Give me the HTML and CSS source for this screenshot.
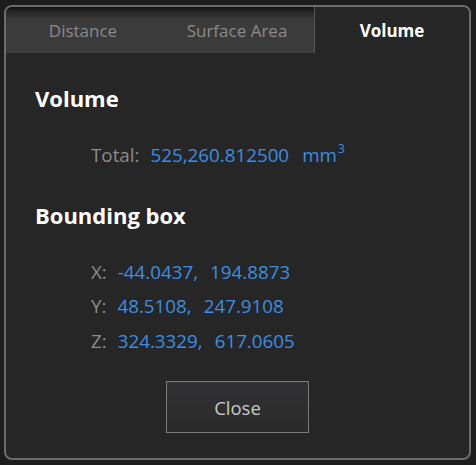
FILE: index.html
```html
<!DOCTYPE html>
<html>
<head>
<meta charset="utf-8">
<link rel="stylesheet" href="styles.css">
</head>
<body>
<div class="dialog">
  <div class="tabs">
    <div class="tab">Distance</div>
    <div class="tab">Surface Area</div>
    <div class="tab active">Volume</div>
  </div>
  <div class="content">
    <h2 class="heading">Volume</h2>
    <div class="row total"><span class="label">Total:</span><span class="value">525,260.812500</span><span class="value unit">mm<sup>3</sup></span></div>
    <h2 class="heading bbox">Bounding box</h2>
    <div class="rows">
      <div class="row"><span class="label">X:</span><span class="value">-44.0437,</span><span class="value">194.8873</span></div>
      <div class="row"><span class="label">Y:</span><span class="value">48.5108,</span><span class="value">247.9108</span></div>
      <div class="row"><span class="label">Z:</span><span class="value">324.3329,</span><span class="value">617.0605</span></div>
    </div>
    <div class="actions"><button class="btn">Close</button></div>
  </div>
</div>
</body>
</html>
```
FILE: styles.css
```css
html, body {
  margin: 0;
  padding: 0;
  background: #1d1d1d;
  width: 476px;
  height: 465px;
  overflow: hidden;
  font-family: "Open Sans", "Noto Sans", sans-serif;
}
body {
  padding: 5px 0 0 4px;
  box-sizing: border-box;
}
.dialog {
  width: 467px;
  height: 455px;
  box-sizing: border-box;
  border: 2px solid #6c6c6c;
  border-radius: 8px;
  background: #262626;
  overflow: hidden;
  display: flex;
  flex-direction: column;
}
.tabs {
  display: flex;
  height: 46px;
  flex: none;
}
.tab {
  flex: 1;
  display: flex;
  align-items: center;
  justify-content: center;
  background: linear-gradient(#111111 0px, #262626 5px, #373737 11px, #3b3b3b 16px, #3b3b3b 100%);
  color: #8a8a8a;
  font-size: 17px;
}
.tab.active {
  background: #262626;
  color: #ffffff;
  font-weight: 700;
  border-left: 1px solid #575757;
}
.content {
  flex: 1;
  padding: 31px 0 0 29px;
  display: flex;
  flex-direction: column;
}
.heading {
  margin: 0;
  color: #ffffff;
  font-size: 22px;
  font-weight: 700;
  line-height: 28px;
}
.row {
  display: flex;
  font-size: 18.8px;
  line-height: 34.5px;
  padding-left: 56px;
}
.total {
  margin-top: 26px;
}
.bbox {
  margin-top: 28px;
}
.rows {
  margin-top: 26px;
}
.label {
  color: #8c8c8c;
  margin-right: 11px;
}
.value {
  color: #3a8fe4;
  margin-right: 12px;
}
.value sup {
  font-size: 12px;
  vertical-align: 9px;
  line-height: 0;
  margin-left: 1px;
}
.unit {
  margin-left: 1px;
}
.actions {
  display: flex;
  justify-content: center;
  margin-top: 23px;
  margin-left: -29px;
}
.btn {
  width: 143px;
  height: 52px;
  border: 1px solid #7a7a7a;
  background: linear-gradient(#323234, #2a2a2b);
  color: #c9c9c9;
  font-family: "Open Sans", "Noto Sans", sans-serif;
  font-size: 18.5px;
  padding: 0;
}
```
